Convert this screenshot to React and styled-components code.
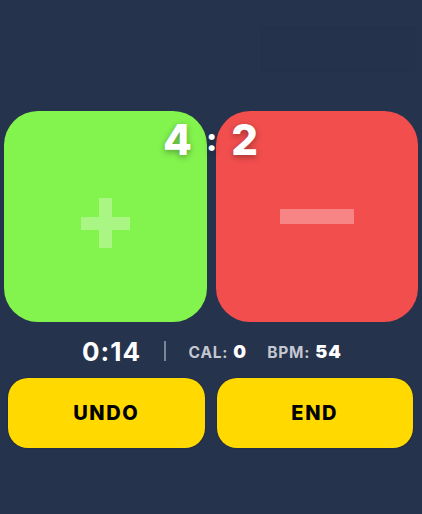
import React from 'react';
import styled, { createGlobalStyle } from 'styled-components';

const GlobalStyle = createGlobalStyle`
    html, body {
        margin: 0;
        padding: 0;
        background: #26334d;
        font-family: Inter, "Liberation Sans", sans-serif;
    }
    #root {
        width: 422px;
        height: 514px;
        overflow: hidden;
    }
`

const Screen = styled.div`
    width: 422px;
    height: 514px;
    background: #26334d;
    display: flex;
    flex-direction: column;
`

const TopBar = styled.div`
    height: 111px;
    display: flex;
    justify-content: flex-end;
    align-items: flex-start;
    padding: 27px 7px 0 0;
    box-sizing: border-box;
`

const GhostBox = styled.div`
    width: 152px;
    height: 43px;
    background: rgba(0, 0, 0, 0.02);
    border: 1px solid rgba(0, 0, 0, 0.025);
`

const Pads = styled.div`
    position: relative;
    display: flex;
    gap: 9px;
    padding: 0 4px;
    height: 211px;
`

const Pad = styled.div`
    flex: 1;
    border-radius: 34px;
    background: ${props => props.color};
    display: flex;
    align-items: center;
    justify-content: center;
    padding-top: 12px;
    box-sizing: border-box;
`

const Plus = styled.div`
    position: relative;
    width: 49px;
    height: 50px;
    &::before, &::after {
        content: '';
        position: absolute;
        background: #a9f684;
    }
    &::before {
        left: 18px;
        top: 0;
        width: 13px;
        height: 50px;
    }
    &::after {
        left: 0;
        top: 19px;
        width: 49px;
        height: 13px;
    }
`

const Minus = styled.div`
    width: 74px;
    height: 15px;
    margin-top: -12px;
    background: #f78585;
`

const Score = styled.div`
    position: absolute;
    top: 5px;
    left: 0;
    right: 0;
    display: flex;
    justify-content: center;
    align-items: center;
    gap: 14px;
    padding-right: 1px;
    color: #fff;
    font-weight: 800;
    font-size: 42px;
    line-height: 48px;
    text-shadow: 0 2px 6px rgba(0, 0, 0, 0.35);
`

const Colon = styled.span`
    font-size: 32px;
    margin-top: 0;
`

const Stats = styled.div`
    height: 56px;
    display: flex;
    align-items: center;
    justify-content: center;
    padding-left: 2px;
    padding-top: 2px;
    box-sizing: border-box;
`

const Time = styled.span`
    color: #fff;
    font-weight: 700;
    font-size: 26px;
    letter-spacing: 1px;
`

const Divider = styled.span`
    width: 1.5px;
    height: 20px;
    background: #7d8596;
    margin: 0 23px 0 23px;
`

const Stat = styled.span`
    color: #c4c8d2;
    font-weight: 700;
    font-size: 15.5px;
    letter-spacing: 0.8px;
    margin-right: ${props => props.gap || 0}px;
    b {
        color: #fff;
        font-size: 18px;
        margin-left: 5px;
        letter-spacing: 1px;
    }
`

const Actions = styled.div`
    display: flex;
    gap: 12px;
    padding: 0 9px 0 8px;
`

const ActionButton = styled.button`
    flex: 1;
    height: 70px;
    border: none;
    border-radius: 20px;
    background: #ffd900;
    color: #000;
    font-family: Inter, "Liberation Sans", sans-serif;
    font-weight: 800;
    font-size: 20px;
    letter-spacing: 1.6px;
    box-shadow: 0 0 2px rgba(0, 0, 0, 0.3);
`

export default function App() {
    return (
        <>
            <GlobalStyle />
            <Screen>
                <TopBar>
                    <GhostBox />
                </TopBar>
                <Pads>
                    <Pad color="#83f34e">
                        <Plus />
                    </Pad>
                    <Pad color="#f24e4e">
                        <Minus />
                    </Pad>
                    <Score>
                        <span>4</span>
                        <Colon>:</Colon>
                        <span>2</span>
                    </Score>
                </Pads>
                <Stats>
                    <Time>0:14</Time>
                    <Divider />
                    <Stat gap={20}>CAL:<b>0</b></Stat>
                    <Stat>BPM:<b>54</b></Stat>
                </Stats>
                <Actions>
                    <ActionButton>UNDO</ActionButton>
                    <ActionButton>END</ActionButton>
                </Actions>
            </Screen>
        </>
    );
}
